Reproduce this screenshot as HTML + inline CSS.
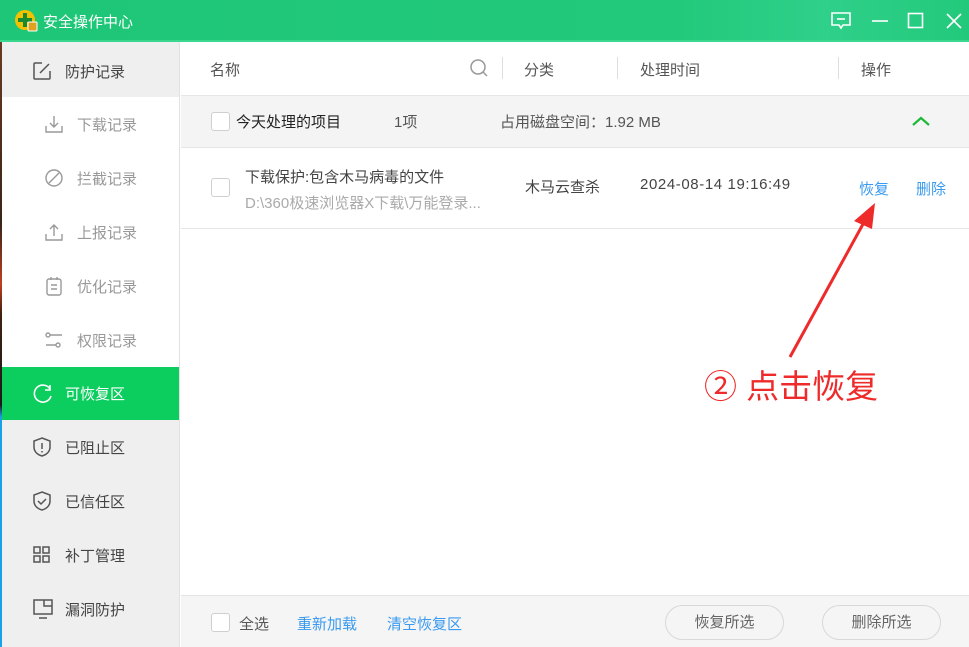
<!DOCTYPE html>
<html><head><meta charset="utf-8"><style>
*{margin:0;padding:0;box-sizing:border-box}
body{width:969px;height:647px;overflow:hidden;position:relative;background:#fff;font-family:"Liberation Sans","Noto Sans CJK SC",sans-serif;font-size:15px;color:#333}
.abs{position:absolute}
.title{left:0;top:0;width:969px;height:42px;background:linear-gradient(90deg,#1ec677,#22c97b 70%,#2fd08a 85%,#22c97b);border-bottom:2px solid #3ad88e}
.strip{left:0;top:42px;width:2px;height:605px;background:linear-gradient(#6a3a20,#3a2418 30%,#c04020 40%,#402010 45%,#1a1a1a 60%,#1aa0e6 62%,#1aa0e6)}
.side{left:2px;top:42px;width:178px;height:605px;background:#efefef;border-right:1px solid #e2e2e2}
.it{position:absolute;left:0;width:177px;height:54px;display:flex;align-items:center;font-size:15px;color:#444}
.it svg{position:absolute;left:30px}
.it span{position:absolute;left:63px}
.sub{background:#fff;color:#999}
.sub svg{left:42px}.sub span{left:75px}
.act{background:#0cce5e;color:#fff}
.cb{position:absolute;width:19px;height:19px;border:1px solid #cfcfcf;border-radius:3px;background:#fff}
.hd{color:#555;font-size:15px}
.sep{position:absolute;width:1px;height:22px;background:#ddd;top:57px}
.blue{color:#3a9af0}
.btn{position:absolute;top:605px;width:119px;height:35px;border:1px solid #d8d8d8;border-radius:18px;background:#f5f5f5;color:#666;font-size:15px;text-align:center;line-height:33px}
</style></head><body>
<div class="abs title"></div>
<svg class="abs" style="left:14px;top:9px" width="24" height="24" viewBox="0 0 24 24"><circle cx="11" cy="11" r="10" fill="#f2c200"/><path d="M4 11h14M11 4v14" stroke="#1a8a30" stroke-width="4"/><rect x="14" y="13" width="9" height="9" rx="1" fill="#e0a020" stroke="#fff" stroke-width="1"/></svg>
<div class="abs" style="left:43px;top:11px;color:#fff;font-size:15px">安全操作中心</div>
<svg class="abs" style="left:830px;top:11px" width="22" height="20" viewBox="0 0 22 20" fill="none" stroke="#fff" stroke-width="1.6"><path d="M2 2h18v12h-7l-2 3-2-3H2z"/><path d="M7 8h8"/></svg>
<svg class="abs" style="left:871px;top:12px" width="18" height="18"><path d="M1 9h16" stroke="#fff" stroke-width="1.6"/></svg>
<svg class="abs" style="left:907px;top:12px" width="18" height="18"><rect x="1.5" y="1.5" width="14" height="14" fill="none" stroke="#fff" stroke-width="1.6"/></svg>
<svg class="abs" style="left:945px;top:12px" width="18" height="18"><path d="M2 2l14 14M16 2L2 16" stroke="#fff" stroke-width="1.6"/></svg>
<div class="abs strip"></div>
<div class="abs side">
<div class="it" style="top:2px;height:54px;background:#efefef"><svg width="20" height="20" viewBox="0 0 20 20" fill="none" stroke="#555" stroke-width="1.5"><path d="M10 2H3a1 1 0 0 0-1 1v14a1 1 0 0 0 1 1h14a1 1 0 0 0 1-1v-7"/><path d="M8 12l9-9"/></svg><span>防护记录</span></div>
<div class="it sub" style="top:55px"><svg width="20" height="20" viewBox="0 0 20 20" fill="none" stroke="#999" stroke-width="1.4"><path d="M10 2v11M6 9l4 4 4-4M2 12v6h16v-6"/></svg><span>下载记录</span></div>
<div class="it sub" style="top:109px"><svg width="20" height="20" viewBox="0 0 20 20" fill="none" stroke="#999" stroke-width="1.4"><circle cx="10" cy="10" r="8"/><path d="M5 15L15 5"/></svg><span>拦截记录</span></div>
<div class="it sub" style="top:163px"><svg width="20" height="20" viewBox="0 0 20 20" fill="none" stroke="#999" stroke-width="1.4"><path d="M10 14V3M6 7l4-4 4 4M2 12v6h16v-6"/></svg><span>上报记录</span></div>
<div class="it sub" style="top:217px"><svg width="20" height="20" viewBox="0 0 20 20" fill="none" stroke="#999" stroke-width="1.4"><rect x="3" y="3" width="14" height="16" rx="2"/><path d="M7 1v3M13 1v3M7 9h6M7 13h6"/></svg><span>优化记录</span></div>
<div class="it sub" style="top:271px"><svg width="20" height="20" viewBox="0 0 20 20" fill="none" stroke="#999" stroke-width="1.4"><circle cx="4" cy="5" r="2"/><path d="M6 5h12M2 15h10"/><circle cx="14" cy="15" r="2"/></svg><span>权限记录</span></div>
<div class="it act" style="top:325px;height:53px"><svg width="22" height="22" viewBox="0 0 22 22" fill="none" stroke="#fff" stroke-width="1.6"><path d="M18 6A8.5 8.5 0 1 0 19 13"/><path d="M18 2v5h-5"/></svg><span>可恢复区</span></div>
<div class="it" style="top:378px"><svg width="20" height="22" viewBox="0 0 20 22" fill="none" stroke="#555" stroke-width="1.5"><path d="M10 2l8 3v6c0 5-4 8-8 9-4-1-8-4-8-9V5z"/><path d="M10 7v6M10 15v1.5"/></svg><span>已阻止区</span></div>
<div class="it" style="top:432px"><svg width="20" height="22" viewBox="0 0 20 22" fill="none" stroke="#555" stroke-width="1.5"><path d="M10 2l8 3v6c0 5-4 8-8 9-4-1-8-4-8-9V5z"/><path d="M6 11l3 3 5-5"/></svg><span>已信任区</span></div>
<div class="it" style="top:486px"><svg width="20" height="20" viewBox="0 0 20 20" fill="none" stroke="#555" stroke-width="1.5"><rect x="2" y="2" width="6" height="6"/><rect x="2" y="11" width="6" height="6"/><rect x="11" y="2" width="6" height="6"/><rect x="11" y="11" width="6" height="6"/></svg><span>补丁管理</span></div>
<div class="it" style="top:540px"><svg width="22" height="22" viewBox="0 0 22 22" fill="none" stroke="#555" stroke-width="1.5"><rect x="2" y="2" width="18" height="14"/><path d="M12 2v6h8M7 20h8"/></svg><span>漏洞防护</span></div>
</div>
<div class="abs hd" style="left:210px;top:59px">名称</div>
<svg class="abs" style="left:469px;top:58px" width="20" height="20" fill="none" stroke="#999" stroke-width="1.5"><circle cx="9" cy="9" r="7"/><path d="M14 14l4 4"/></svg>
<div class="sep" style="left:502px"></div>
<div class="abs hd" style="left:524px;top:59px">分类</div>
<div class="sep" style="left:617px"></div>
<div class="abs hd" style="left:640px;top:59px">处理时间</div>
<div class="sep" style="left:838px"></div>
<div class="abs hd" style="left:861px;top:59px">操作</div>
<div class="abs" style="left:181px;top:95px;width:788px;height:53px;background:#f4f4f4;border-top:1px solid #e6e6e6;border-bottom:1px solid #e6e6e6"></div>
<div class="cb" style="left:211px;top:112px"></div>
<div class="abs" style="left:236px;top:111px;color:#222">今天处理的项目</div>
<div class="abs" style="left:394px;top:111px;color:#555">1项</div>
<div class="abs" style="left:500px;top:111px;color:#555">占用磁盘空间：1.92 MB</div>
<svg class="abs" style="left:910px;top:114px" width="22" height="14"><path d="M3 11l8-7 8 7" fill="none" stroke="#1fb83a" stroke-width="2.2"/></svg>
<div class="cb" style="left:211px;top:178px"></div>
<div class="abs" style="left:245px;top:166px;color:#444">下载保护:包含木马病毒的文件</div>
<div class="abs" style="left:245px;top:192px;color:#aaa">D:\360极速浏览器X下载\万能登录...</div>
<div class="abs" style="left:525px;top:176px;color:#444">木马云查杀</div>
<div class="abs" style="left:640px;top:176px;color:#444;letter-spacing:0.6px">2024-08-14 19:16:49</div>
<div class="abs blue" style="left:859px;top:178px">恢复</div>
<div class="abs blue" style="left:916px;top:178px">删除</div>
<div class="abs" style="left:181px;top:228px;width:788px;height:1px;background:#e6e6e6"></div>
<svg class="abs" style="left:780px;top:195px" width="110" height="170"><path d="M10 162L88 20" stroke="#ee2a2a" stroke-width="3"/><path d="M95 8L74 26L92 34z" fill="#ee2a2a"/></svg>
<div class="abs" style="left:704px;top:360px;color:#ee2a2a;font-size:33px">② 点击恢复</div>
<div class="abs" style="left:181px;top:595px;width:788px;height:52px;background:#f5f5f5;border-top:1px solid #e4e4e4"></div>
<div class="cb" style="left:211px;top:613px"></div>
<div class="abs" style="left:239px;top:613px;color:#555">全选</div>
<div class="abs blue" style="left:297px;top:613px">重新加载</div>
<div class="abs blue" style="left:387px;top:613px">清空恢复区</div>
<div class="btn" style="left:665px">恢复所选</div>
<div class="btn" style="left:822px">删除所选</div>
</body></html>
